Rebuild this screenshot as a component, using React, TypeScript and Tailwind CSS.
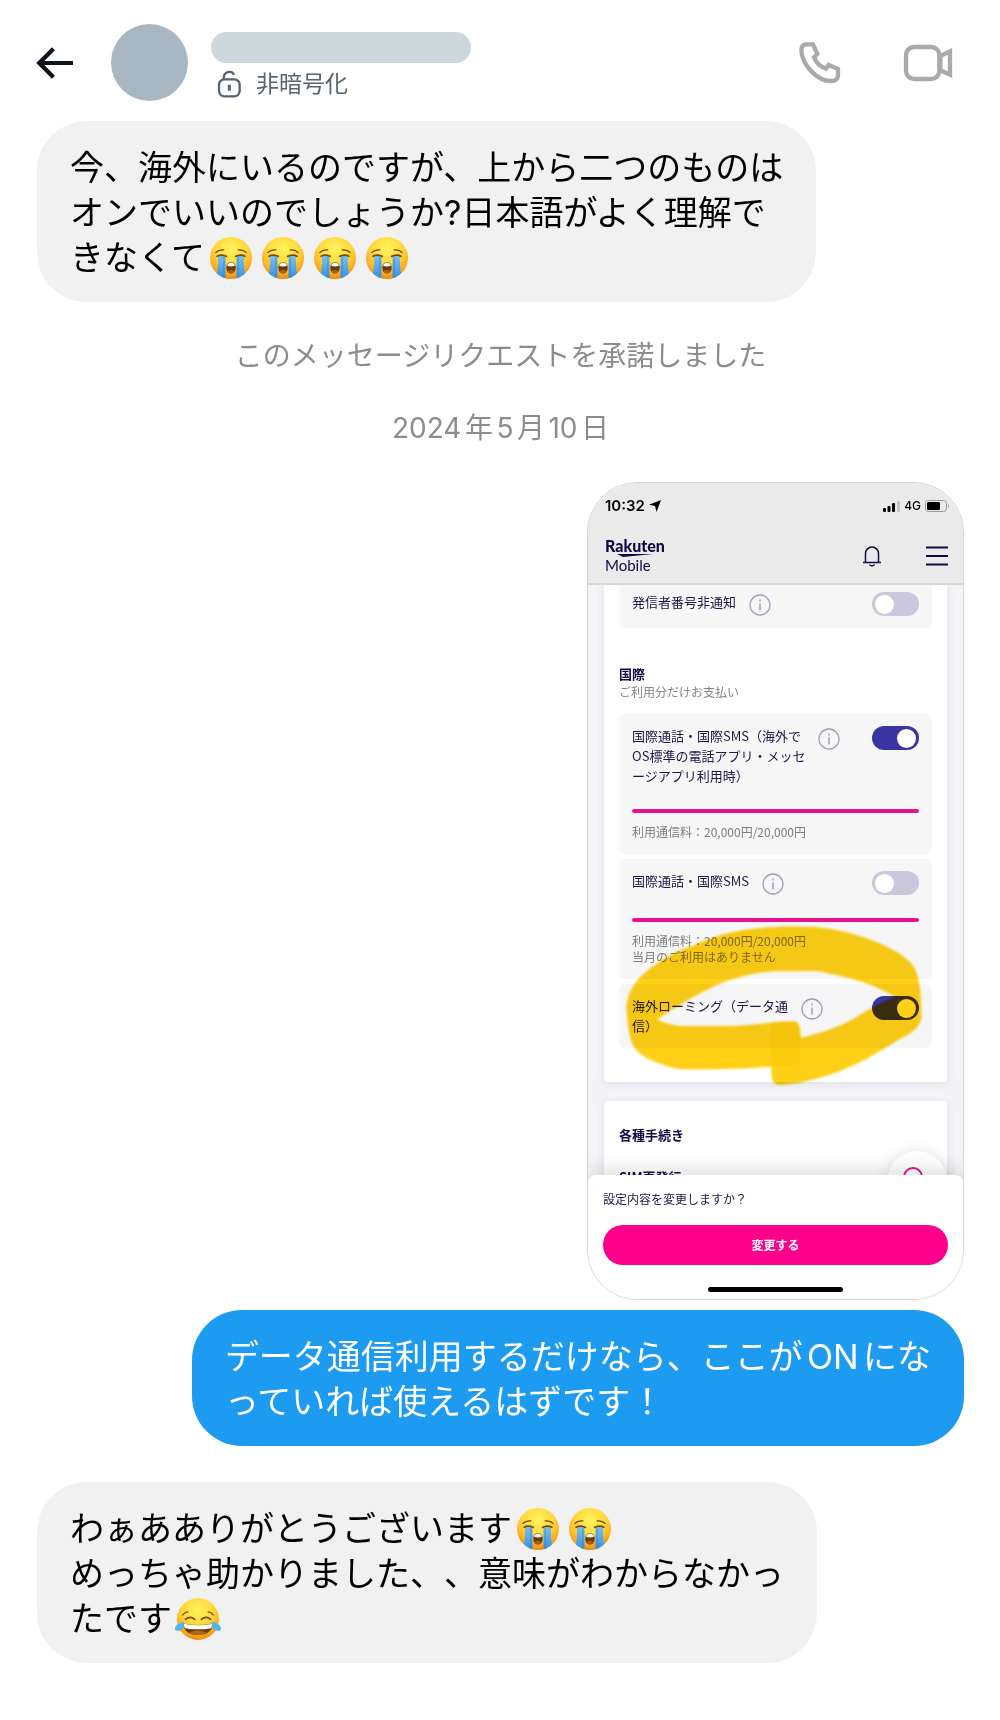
import { useId, type ReactNode } from 'react';
import { clsx } from 'clsx';

/**
 * Direct message thread: header with call actions, text bubbles and one
 * shared phone screen.
 */
export default function App() {
  return (
    <div className="min-h-screen bg-white pb-14 font-[Inter,'Noto_Sans_CJK_JP',sans-serif] text-black">
      <ThreadHeader />

      <main className="flex flex-col gap-9 pr-9 pl-[37px]">
        <Bubble side="left">
          今、海外にいるのですが、上から二つのものは
          <br />
          オンでいいのでしょうか?日本語がよく理解で
          <br />
          きなくて
          <SobbingFace />
          <SobbingFace />
          <SobbingFace />
          <SobbingFace />
        </Bubble>

        <Notice>このメッセージリクエストを承諾しました</Notice>
        <Notice>2024年5月10日</Notice>

        <div className="flex flex-col items-end gap-2.5">
          <SharedScreen />
          <Bubble side="right">
            データ通信利用するだけなら、ここがONにな
            <br />
            っていれば使えるはずです！
          </Bubble>
        </div>

        <Bubble side="left">
          わぁあありがとうございます
          <SobbingFace />
          <SobbingFace />
          <br />
          めっちゃ助かりました、、意味がわからなかっ
          <br />
          たです
          <JoyFace />
        </Bubble>
      </main>
    </div>
  );
}

function ThreadHeader() {
  return (
    <header className="flex items-center pt-6 pr-[47px] pb-5 pl-[35px]">
      <button type="button" aria-label="戻る" className="cursor-pointer">
        <svg viewBox="3 4 18 16" className="h-[34px] w-[38px] fill-[#0f1419]">
          <path d="M7.414 13l5.043 5.04-1.414 1.42L3.586 12l7.457-7.46 1.414 1.42L7.414 11H21v2H7.414z" />
        </svg>
      </button>
      <div className="ml-[38px] size-[77px] shrink-0 rounded-full bg-[#a9b7c2]" />
      <div className="ml-[23px] flex flex-1 flex-col gap-1 pt-2">
        <div className="h-[31px] w-[260px] rounded-full bg-[#cdd8dc]" />
        <div className="flex items-center gap-3.5 pl-1.5 text-[23px] leading-[34px] text-[#566370]">
          <svg
            viewBox="0 0 75 84"
            className="h-7 w-[25px]"
            fill="none"
            stroke="currentColor"
            strokeWidth="7"
          >
            <rect x="6" y="28" width="62" height="51" rx="16" />
            <path d="M20 28v-4C20 4 44 0 51 14" />
            <path d="M37 44v18" strokeWidth="9" />
          </svg>
          非暗号化
        </div>
      </div>
      <div className="flex items-center gap-[62px] text-[#a9abab]">
        <button type="button" aria-label="音声通話" className="cursor-pointer">
          <svg
            viewBox="0 0 129 129"
            className="size-[43px]"
            fill="none"
            stroke="currentColor"
            strokeWidth="13"
          >
            <path d="M24 10h21l13 29-10 10c7 18 20 29 36 34l8-11 28 12v20q-2 15-18 16c-42 2-90-46-92-93q0-15 14-17z" />
          </svg>
        </button>
        <button type="button" aria-label="ビデオ通話" className="cursor-pointer">
          <svg
            viewBox="0 0 150 114"
            className="h-[38px] w-[50px]"
            fill="none"
            stroke="currentColor"
            strokeWidth="13"
          >
            <rect x="9" y="9" width="100" height="96" rx="24" />
            <path d="M112 36l29-14v70l-29-13z" />
          </svg>
        </button>
      </div>
    </header>
  );
}

function Bubble({ side, children }: { side: 'left' | 'right'; children: ReactNode }) {
  return (
    <p
      className={clsx(
        'w-fit rounded-[50px] px-[33px] pt-6 pb-[22px] text-[34px] leading-[45px] [text-autospace:normal] [text-spacing-trim:space-all]',
        side === 'left' ? 'self-start bg-[#f1f1f1]' : 'self-end bg-[#1d9bf0] text-white',
      )}
    >
      {children}
    </p>
  );
}

function Notice({ children }: { children: ReactNode }) {
  return (
    <p className="text-center text-[28px] leading-9 text-[#8c8c8c] [text-autospace:normal]">
      {children}
    </p>
  );
}

function SharedScreen() {
  return (
    <section className="w-[377px] overflow-hidden rounded-[50px] border border-[#d6d6d6] bg-white font-['Noto_Sans_CJK_JP',sans-serif] text-[13px] leading-5 text-[#1c1648]">
      <div className="border-b-2 border-[#d6d6d6] bg-[#eaeaea] pr-[13px] pl-[17px]">
        <StatusBar />
        <div className="flex items-center pt-[22px] pb-[10px] pr-0.5">
          <Logo />
          <button type="button" aria-label="お知らせ" className="ml-auto cursor-pointer">
            <svg
              viewBox="0 0 20 22"
              className="h-[22px] w-5"
              fill="none"
              stroke="#0e0a45"
              strokeWidth="1.5"
            >
              <path d="M1 17.500h18M3.500 17.500V8.500a6.500 6.500 0 0 1 13 0v9M7.500 19.500c.8 1.800 4.200 1.800 5 0" />
            </svg>
          </button>
          <button type="button" aria-label="メニュー" className="ml-11 cursor-pointer">
            <svg viewBox="0 0 22 20" className="h-5 w-[22px]" stroke="#0e0a45" strokeWidth="1.8">
              <path d="M0 1.500h22M0 10h22M0 18.500h22" />
            </svg>
          </button>
        </div>
      </div>

      <div className="relative h-[598px] overflow-hidden bg-[#f4f4f7] px-4">
        <div className="rounded-b bg-white px-[15px] pb-[34px] shadow-[0_2px_10px_rgba(40,40,90,0.1)]">
          <div className="rounded-b-md bg-[#f6f6f6] px-[13px] pt-[7px] pb-3">
            <SettingRow label="発信者番号非通知" />
          </div>

          <h2 className="mt-9 font-bold text-[#120c45]">国際</h2>
          <p className="text-xs leading-4 text-[#858585]">ご利用分だけお支払い</p>

          <div className="mt-3.5 flex flex-col gap-[5px]">
            <div className="rounded-md bg-[#f6f6f6] px-[13px] pt-3 pb-3.5">
              <SettingRow
                label={
                  <>
                    国際通話・国際SMS（海外で
                    <br />
                    OS標準の電話アプリ・メッセ
                    <br />
                    ージアプリ利用時）
                  </>
                }
                on
              />
              <Usage lines={['利用通信料：20,000円/20,000円']} />
            </div>
            <div className="rounded-md bg-[#f6f6f6] px-[13px] pt-3 pb-3.5">
              <SettingRow label="国際通話・国際SMS" />
              <Usage lines={['利用通信料：20,000円/20,000円', '当月のご利用はありません']} />
            </div>
            <div className="rounded-md bg-[#f6f6f6] px-[13px] py-3">
              <SettingRow
                label={
                  <>
                    海外ローミング（データ通
                    <br />
                    信）
                  </>
                }
                on
              />
            </div>
          </div>
        </div>

        <div className="mt-[19px] h-32 rounded bg-white px-[15px] pt-6 font-bold text-[#120c45] shadow-[0_2px_10px_rgba(40,40,90,0.1)]">
          <h2>各種手続き</h2>
          <p className="mt-[22px]">SIM再発行</p>
        </div>

        <MarkerRing />

        {/* chat launcher, half hidden behind the sheet */}
        <div className="absolute right-4 -bottom-7 flex size-[60px] items-start justify-center rounded-full bg-white pt-4 shadow-[0_0_14px_rgba(0,0,0,0.12)]">
          <div className="mr-2 size-5 rounded-full border-2 border-[#e0118c]" />
        </div>
      </div>

      <div className="relative -mt-2 rounded-t-lg bg-white px-[15px] pt-3.5 pb-[7px] shadow-[0_-4px_20px_rgba(0,0,0,0.14)]">
        <p className="text-xs leading-5">設定内容を変更しますか？</p>
        <button
          type="button"
          className="mt-4 block h-10 w-full cursor-pointer rounded-full bg-[#ff008c] text-xs font-bold text-white"
        >
          変更する
        </button>
        <div className="mx-auto mt-[22px] h-[5px] w-[135px] rounded-full bg-black" />
      </div>
    </section>
  );
}

function StatusBar() {
  return (
    <div className="flex items-center pt-[13px] font-[Inter,sans-serif] text-[15px] font-semibold text-black">
      10:32
      <svg viewBox="0 0 12 12" className="ml-1 size-3">
        <path d="M12 0L7.500 12 6 6 0 4.800z" />
      </svg>
      <svg viewBox="0 0 17 12" className="ml-auto h-3 w-[17px]">
        <rect y="8" width="3" height="4" rx="1" />
        <rect x="4.500" y="6" width="3" height="6" rx="1" />
        <rect x="9" y="3" width="3" height="9" rx="1" />
        <rect x="14" y="1" width="3" height="11" rx="1" fill="#c4c4c4" />
      </svg>
      <span className="ml-1 text-xs font-medium">4G</span>
      <svg viewBox="0 0 25 12" className="ml-1 h-3 w-[25px]">
        <rect x=".5" y=".5" width="21" height="11" rx="3" fill="none" stroke="#9a9a9a" />
        <rect x="2" y="2" width="13" height="8" rx="1.500" />
        <path d="M23 4q2 2 0 4z" fill="#9a9a9a" />
      </svg>
    </div>
  );
}

function Logo() {
  return (
    <div className="font-[Lato,sans-serif] leading-4 text-[#0e0a45]">
      <div className="text-base leading-4 font-black">Rakuten</div>
      <svg viewBox="0 0 60 3" className="h-[3px] w-[60px]">
        <path d="M12 0h36l-30 3z" fill="#0e0a45" />
      </svg>
      <div className="text-[15px] leading-4">Mobile</div>
    </div>
  );
}

function SettingRow({ label, on = false }: { label: ReactNode; on?: boolean }) {
  const id = useId();
  return (
    <div className="flex min-h-6 items-start">
      <label htmlFor={id}>{label}</label>
      <button type="button" aria-label="詳細" className="mt-0.5 ml-[13px] cursor-pointer">
        <svg
          viewBox="0 0 22 22"
          className="size-[22px]"
          fill="none"
          stroke="#a09dbd"
          strokeWidth="1.300"
        >
          <circle cx="11" cy="11" r="10" />
          <path d="M11 9.500v7M11 5.500v2" strokeWidth="1.500" />
        </svg>
      </button>
      <input
        id={id}
        type="checkbox"
        defaultChecked={on}
        className="ml-auto flex h-6 w-[47px] cursor-pointer appearance-none items-center rounded-full bg-[#cbc8dd] px-[3px] before:size-[19px] before:rounded-full before:bg-white checked:justify-end checked:bg-[#3a35a3]"
      />
    </div>
  );
}

function Usage({ lines }: { lines: string[] }) {
  return (
    <>
      <div className="mt-[23px] h-1 rounded-full bg-[#e6128d]" />
      <div className="mt-[11px] text-xs leading-4 text-[#7d7d7d]">
        {lines.map((line) => (
          <p key={line}>{line}</p>
        ))}
      </div>
    </>
  );
}

/** Hand-drawn highlighter loop around the roaming switch. */
function MarkerRing() {
  return (
    <svg
      viewBox="129 219 900 498"
      className="pointer-events-none absolute top-[338px] left-9 h-[166px] w-[300px] mix-blend-multiply"
    >
      <defs>
        <filter id="marker-soft">
          <feGaussianBlur stdDeviation="2.500" />
        </filter>
      </defs>
      <g filter="url(#marker-soft)">
        <path
          fill="#ffd016"
          fillRule="evenodd"
          d="M136 470C140 430 160 395 190 370C235 330 290 300 335 287C400 258 460 242 510 237C570 229 640 228 700 231C760 236 820 250 870 270C930 292 975 320 995 345C1015 375 1020 420 1022 500C1020 530 990 550 960 565C900 602 840 640 780 662C710 688 650 702 600 705C575 707 572 690 570 650C500 656 420 659 300 658C250 650 200 630 170 605C145 580 140 530 136 470Z
             M228 508C290 468 350 430 410 404C470 380 530 366 580 364L710 363C760 373 810 386 850 398C890 412 920 428 942 440C890 462 850 485 815 508C770 533 710 553 660 563C657 535 658 514 636 514C580 514 520 526 450 528L300 528C270 525 245 518 228 508Z"
        />
        <path
          fill="#f9bd00"
          fillOpacity=".25"
          d="M570 516L636 514C655 514 657 540 658 640L640 646L570 650Z"
        />
      </g>
    </svg>
  );
}

function FaceGradient({ id }: { id: string }) {
  return (
    <radialGradient id={id} cx="50%" cy="28%" r="72%">
      <stop offset="0" stopColor="#fff35f" />
      <stop offset=".5" stopColor="#ffd93a" />
      <stop offset=".8" stopColor="#fcae22" />
      <stop offset="1" stopColor="#e98a0c" />
    </radialGradient>
  );
}

function SobbingFace() {
  const id = useId();
  return (
    <svg
      role="img"
      aria-label="大泣き"
      viewBox="0 0 124 124"
      className="mx-[5px] inline-block size-[42px] align-[-9px]"
    >
      <defs>
        <FaceGradient id={id} />
        <linearGradient id={`${id}t`} x1="0" y1="0" x2="0" y2="1">
          <stop offset="0" stopColor="#7cbfee" />
          <stop offset="1" stopColor="#2f93e8" />
        </linearGradient>
        <clipPath id={`${id}c`}>
          <circle cx="62" cy="62" r="62" />
        </clipPath>
      </defs>
      <circle cx="62" cy="62" r="62" fill={`url(#${id})`} />
      <g clipPath={`url(#${id}c)`} fill={`url(#${id}t)`}>
        <path d="M24 56h22v66H18q6-20 6-66z" />
        <path d="M78 56h22q0 46 6 66H78z" />
        <path d="M39 60h4v60h-4zM81 60h4v60h-4z" fill="#4779a8" fillOpacity=".5" />
      </g>
      <g fill="none" stroke="#7a4a0c" strokeLinecap="round">
        <path d="M21 57q10-7 27 0M76 57q17-7 27 0" strokeWidth="5" />
        <path d="M17 46q8-9 24-8M83 38q16-1 24 8" strokeWidth="3.500" />
      </g>
      <ellipse cx="62" cy="91" rx="14" ry="17" fill="#6d3a05" />
      <path d="M51 82q11-14 22 0v3q-11 4-22 0z" fill="#fff" />
      <path d="M52 101q10-9 20 0q-10 12-20 0z" fill="#a9630b" />
    </svg>
  );
}

function JoyFace() {
  const id = useId();
  return (
    <svg
      role="img"
      aria-label="嬉し泣き"
      viewBox="0 0 136 124"
      className="mx-[3px] inline-block h-[42px] w-[46px] align-[-9px]"
    >
      <defs>
        <FaceGradient id={id} />
      </defs>
      <circle cx="68" cy="62" r="62" fill={`url(#${id})`} />
      <g fill="none" stroke="#7a4a0c" strokeLinecap="round">
        <path d="M31 63q14-12 27 0M78 63q14-12 27 0" strokeWidth="5" />
        <path d="M23 50q6-8 15-9M98 41q9 1 15 9" strokeWidth="4" />
      </g>
      <path d="M23 75q45 10 90 0q-5 34-45 34t-45-34z" fill="#6d3a05" />
      <path d="M25 76q43 9 86 0l-4 13q-39 7-78 0z" fill="#fff" />
      <path d="M42 102q26-12 52 0q-26 14-52 0z" fill="#b36a10" />
      <path d="M26 70q2 27-14 27T1 86q3-10 25-16zM110 70q-2 27 14 27t11-11q-3-10-25-16z" fill="#4fb7ee" />
    </svg>
  );
}
